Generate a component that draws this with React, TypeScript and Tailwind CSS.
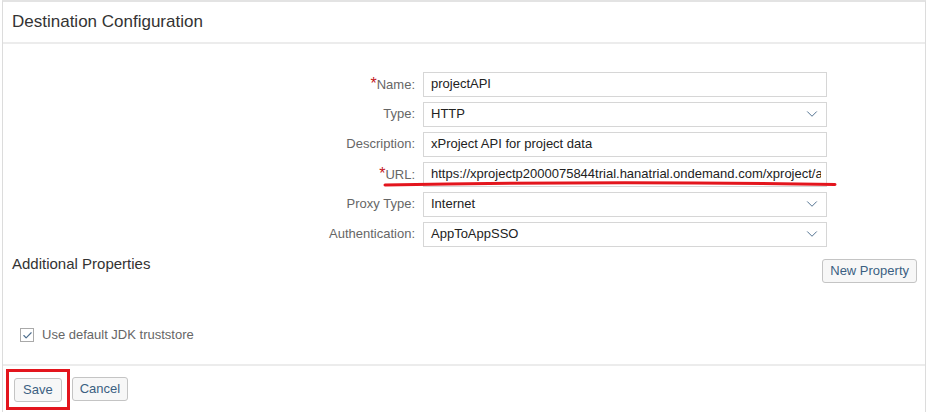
import { ChevronDown, Check } from "lucide-react";

type Field = {
  label: string;
  value: string;
  required?: boolean;
  select?: boolean;
};

const fields: Field[] = [
  { label: "Name:", value: "projectAPI", required: true },
  { label: "Type:", value: "HTTP", select: true },
  { label: "Description:", value: "xProject API for project data" },
  { label: "URL:", value: "https://xprojectp2000075844trial.hanatrial.ondemand.com/xproject/api/v1", required: true },
  { label: "Proxy Type:", value: "Internet", select: true },
  { label: "Authentication:", value: "AppToAppSSO", select: true },
];

const btn =
  "h-[24px] px-[7px] text-[13px] text-[#3b5f82] bg-[#f7f7f7] border border-[#c4c4c4] rounded-[3px]";

export default function App() {
  return (
    <div
      className="relative w-[927px] h-[412px] overflow-hidden bg-white text-[#333]"
      style={{ fontFamily: '"Liberation Sans", Arial, sans-serif' }}
    >
      <div className="ml-[2px] w-[924px] h-[430px] border border-[#dcdcdc] border-t-[2px] border-t-[#e3e3e3]">
        {/* header */}
        <div className="h-[42px] px-[9px] flex items-center border-b-2 border-[#ececec]">
          <h1 className="text-[17px] text-[#333]">Destination Configuration</h1>
        </div>

        {/* form */}
        <div className="pt-[28px] flex flex-col gap-[6px]">
          {fields.map((f) => (
            <div key={f.label} className="flex items-center h-[24px]">
              <label className="w-[412px] text-right text-[13px] text-[#666]">
                {f.required && <span className="text-[#c4161c] text-[16px]">*</span>}
                {f.label}
              </label>
              <div className="ml-[8px] w-[404px] h-[25px] border border-[#d6d6d6] bg-white flex items-center pl-[7px] pr-[5px] overflow-hidden">
                {f.select ? (
                  <>
                    <span className="flex-1 whitespace-nowrap text-[13px] text-[#222]">{f.value}</span>
                    <ChevronDown className="w-[18px] h-[18px] text-[#4f6f8f] shrink-0" strokeWidth={1.3} />
                  </>
                ) : (
                  <input
                    readOnly
                    value={f.value}
                    className="flex-1 min-w-0 bg-transparent outline-none text-[13px] text-[#222]"
                    style={{ fontFamily: '"Liberation Sans", Arial, sans-serif' }}
                  />
                )}
              </div>
            </div>
          ))}
        </div>

        {/* additional properties */}
        <div className="mt-[13px] pl-[9px] pr-[8px] flex justify-between items-start">
          <h2 className="text-[15px] text-[#333] mt-[-6px]">Additional Properties</h2>
          <button className={btn}>New Property</button>
        </div>

        <div className="mt-[45px] pl-[17px] flex items-center gap-[8px] h-[14px]">
          <span className="w-[14px] h-[14px] border border-[#a9a9a9] bg-white flex items-center justify-center">
            <Check className="w-[11px] h-[11px] text-[#4f6f8f]" strokeWidth={2.5} />
          </span>
          <span className="text-[13px] text-[#666]">Use default JDK truststore</span>
        </div>

        {/* footer */}
        <div className="mt-[22px] border-t-2 border-[#ececec] pt-[3px] pl-[3px] flex items-start gap-[2px]">
          <div className="border-[3px] border-[#e3151d] p-[5px]">
            <button className={`${btn} px-[8px]`}>Save</button>
          </div>
          <button className={`mt-[8px] ${btn}`}>Cancel</button>
        </div>
      </div>

      {/* hand-drawn underline under URL */}
      <svg className="absolute left-0 top-0 pointer-events-none" width="927" height="412">
        <path d="M385 185 Q 610 181 835 184.5" stroke="#e3151d" strokeWidth="3" fill="none" strokeLinecap="round" />
      </svg>
    </div>
  );
}
